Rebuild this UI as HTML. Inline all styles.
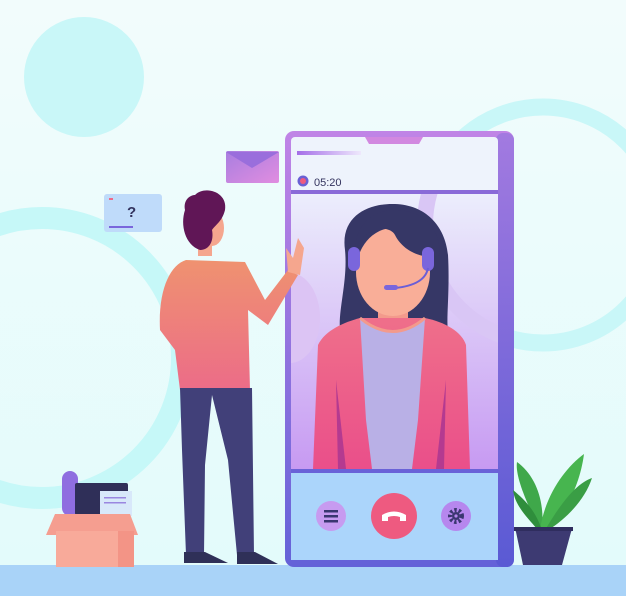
<!DOCTYPE html>
<html><head><meta charset="utf-8"><style>
html,body{margin:0;padding:0;width:626px;height:596px;overflow:hidden;background:#eefcfc}
svg{display:block}
</style></head><body>
<svg width="626" height="596" viewBox="0 0 626 596" xmlns="http://www.w3.org/2000/svg" font-family="Liberation Sans, sans-serif">
<defs>
<linearGradient id="bg" x1="0" y1="0" x2="0" y2="1"><stop offset="0" stop-color="#f2fcfc"/><stop offset="1" stop-color="#e2fbfb"/></linearGradient>
<linearGradient id="frame" x1="0" y1="0" x2="0" y2="1"><stop offset="0" stop-color="#c084e6"/><stop offset="1" stop-color="#6462d8"/></linearGradient>
<linearGradient id="frameR" x1="0" y1="0" x2="0" y2="1"><stop offset="0" stop-color="#a27ae0"/><stop offset="1" stop-color="#5a5ad4"/></linearGradient>
<linearGradient id="video" x1="0" y1="0" x2="0" y2="1"><stop offset="0" stop-color="#eceefc"/><stop offset="1" stop-color="#c79af2"/></linearGradient>
<linearGradient id="sweater" x1="0" y1="0" x2="0" y2="1"><stop offset="0" stop-color="#ef9270"/><stop offset="1" stop-color="#ec6c88"/></linearGradient>
<linearGradient id="card" x1="0" y1="0" x2="0" y2="1"><stop offset="0" stop-color="#ef6f8a"/><stop offset="1" stop-color="#ea4f8a"/></linearGradient>
<linearGradient id="env" x1="0" y1="0" x2="1" y2="1"><stop offset="0" stop-color="#a87ee0"/><stop offset="1" stop-color="#e18de0"/></linearGradient>
<linearGradient id="bar" x1="0" y1="0" x2="1" y2="0"><stop offset="0" stop-color="#a56ee8"/><stop offset="1" stop-color="#eee8fc"/></linearGradient>
<clipPath id="vclip"><rect x="291" y="194" width="207" height="275"/></clipPath>
</defs>
<rect width="626" height="596" fill="url(#bg)"/>
<circle cx="84" cy="77" r="60" fill="#c9f7f8"/>
<circle cx="42" cy="358" r="140" fill="none" stroke="#c6f8f8" stroke-width="22"/>
<circle cx="543" cy="225" r="118" fill="none" stroke="#c9f7f8" stroke-width="17"/>
<rect x="0" y="565" width="626" height="31" fill="#a9d3f8"/>

<!-- phone -->
<rect x="285" y="131" width="229" height="436" rx="9" fill="url(#frame)"/>
<rect x="496" y="133" width="18" height="434" rx="7" fill="url(#frameR)"/>
<rect x="291" y="137" width="207" height="423" rx="4" fill="#eef3fc"/>
<path d="M365 137 L369 144 L419 144 L423 137 Z" fill="#d288e0"/>
<rect x="297" y="151" width="64" height="4" fill="url(#bar)"/>
<circle cx="303" cy="181" r="5.5" fill="#6a60d4"/><circle cx="303" cy="181" r="3" fill="#ee5a80"/>
<text x="314" y="186" font-size="11" fill="#33335e">05:20</text>
<rect x="291" y="190" width="207" height="4" fill="#8a6ad8"/>
<rect x="291" y="194" width="207" height="275" fill="url(#video)"/>
<g clip-path="url(#vclip)">
<circle cx="543" cy="225" r="118" fill="none" stroke="#d9c6f5" stroke-width="16"/>
<ellipse cx="290" cy="318" rx="30" ry="45" fill="#dcc4f4"/>
</g>
<!-- woman -->
<path d="M345 250 C340 215 370 203 395 204 C425 205 445 225 448 255 C450 290 446 320 448 330 L340 330 C338 310 348 280 345 250Z" fill="#363766"/>
<rect x="378" y="300" width="30" height="30" fill="#f39a8c"/>
<ellipse cx="393" cy="272" rx="37" ry="44" fill="#f9ae98"/>
<path d="M355 250 C365 225 390 225 395 235 C405 255 430 260 440 255 C440 225 420 210 395 210 C370 210 355 228 355 250Z" fill="#363766"/>
<rect x="348" y="247" width="12" height="24" rx="6" fill="#7a66dc"/>
<rect x="422" y="247" width="12" height="24" rx="6" fill="#7a66dc"/>
<path d="M428 268 Q425 285 395 288" fill="none" stroke="#6a5ed6" stroke-width="2"/>
<rect x="384" y="285" width="14" height="5" rx="2.5" fill="#7a66dc"/>
<path d="M318 345 C325 330 345 322 360 318 L425 318 C445 322 462 332 466 345 L470 469 L313 469 Z" fill="url(#card)"/>
<path d="M360 318 Q393 345 425 318 L418 420 L412 469 L372 469 L366 420 Z" fill="#b9b0e6"/>
<path d="M360 318 Q393 345 425 318" fill="none" stroke="#f39a8c" stroke-width="3"/>
<path d="M336 380 L338 469 L346 469 Z" fill="#b43a90"/>
<path d="M446 380 L444 469 L436 469 Z" fill="#b43a90"/>
<rect x="291" y="469" width="207" height="4" fill="#6a62d8"/>
<rect x="291" y="473" width="207" height="87" fill="#abd5fb"/>
<circle cx="331" cy="516" r="15" fill="#c79bf0"/>
<rect x="324" y="510" width="14" height="2.5" fill="#3a3670"/><rect x="324" y="515" width="14" height="2.5" fill="#3a3670"/><rect x="324" y="520" width="14" height="2.5" fill="#3a3670"/>
<circle cx="394" cy="516" r="23" fill="#ee5a80"/>
<path d="M382 521 L382 515 Q394 508 406 515 L406 521 L400 521 L400 517 Q394 515 388 517 L388 521 Z" fill="#fff"/>
<circle cx="456" cy="516" r="15" fill="#b687ee"/>
<circle cx="456" cy="516" r="6" fill="none" stroke="#3a3670" stroke-width="4" stroke-dasharray="2.4 2"/>
<circle cx="456" cy="516" r="4" fill="#3a3670"/><circle cx="456" cy="516" r="1.6" fill="#b687ee"/>

<!-- envelope & card -->
<rect x="226" y="151" width="53" height="32" rx="2" fill="url(#env)"/>
<path d="M226 152 L252 168 L279 152" fill="#9a6edc"/>
<rect x="104" y="194" width="58" height="38" rx="3" fill="#bfdbfa"/>
<rect x="109" y="198" width="4" height="2" fill="#ee6a88"/>
<text x="127" y="217" font-size="15" font-weight="bold" fill="#33335e">?</text>
<rect x="109" y="226" width="24" height="2" fill="#7a66dc"/>

<!-- man -->
<path d="M186 260 C170 265 158 290 160 330 L175 350 L180 390 L250 390 L248 310 L268 325 L298 275 L288 270 L265 300 L245 262 Z" fill="url(#sweater)"/>
<path d="M288 272 L286 248 L293 258 L298 238 L304 248 L300 275 Z" fill="#f5a68e"/>
<rect x="198" y="240" width="14" height="16" fill="#f5a68e"/>
<ellipse cx="212" cy="228" rx="12" ry="18" fill="#f5a68e"/>
<path d="M195 195 C205 185 228 192 225 210 C222 222 215 225 212 230 C214 240 210 250 200 250 C185 245 180 225 185 210 C183 200 190 195 195 195Z" fill="#601656"/>
<path d="M180 388 L252 388 L254 555 L237 555 L228 460 L212 395 L205 465 L204 555 L186 555 L182 450 Z" fill="#414079"/>
<path d="M184 552 L205 552 L228 563 L184 563 Z" fill="#2f3058"/>
<path d="M237 552 L255 552 L278 564 L237 564 Z" fill="#2f3058"/>

<!-- box -->
<rect x="62" y="471" width="16" height="45" rx="8" fill="#8f6ee0"/>
<rect x="75" y="483" width="53" height="32" rx="2" fill="#2f2f58"/>
<rect x="100" y="491" width="32" height="25" fill="#d8e8fa"/>
<rect x="104" y="497" width="22" height="1.5" fill="#9a86e0"/><rect x="104" y="502" width="22" height="1.5" fill="#9a86e0"/>
<path d="M55 514 L130 514 L138 535 L46 535 Z" fill="#f59e90"/>
<rect x="56" y="531" width="78" height="36" fill="#f8aa9a"/>
<rect x="118" y="531" width="16" height="36" fill="#f39486"/>

<!-- plant -->
<path d="M540 530 C525 500 515 475 517 462 C535 475 545 500 542 530Z" fill="#3fa84a"/>
<path d="M540 530 C545 495 565 468 584 454 C580 485 565 515 545 530Z" fill="#47b54f"/>
<path d="M545 530 C560 505 575 484 592 478 C585 500 565 520 548 530Z" fill="#3a9e45"/>
<path d="M538 530 C525 515 515 505 513 490 C525 500 535 510 542 530Z" fill="#2f8e3c"/>
<path d="M514 527 L573 527 L571 532 L562 565 L523 565 L516 532 Z" fill="#3d3a72"/>
<rect x="514" y="527" width="59" height="4" fill="#2f2d5e"/>
</svg>
</body></html>
